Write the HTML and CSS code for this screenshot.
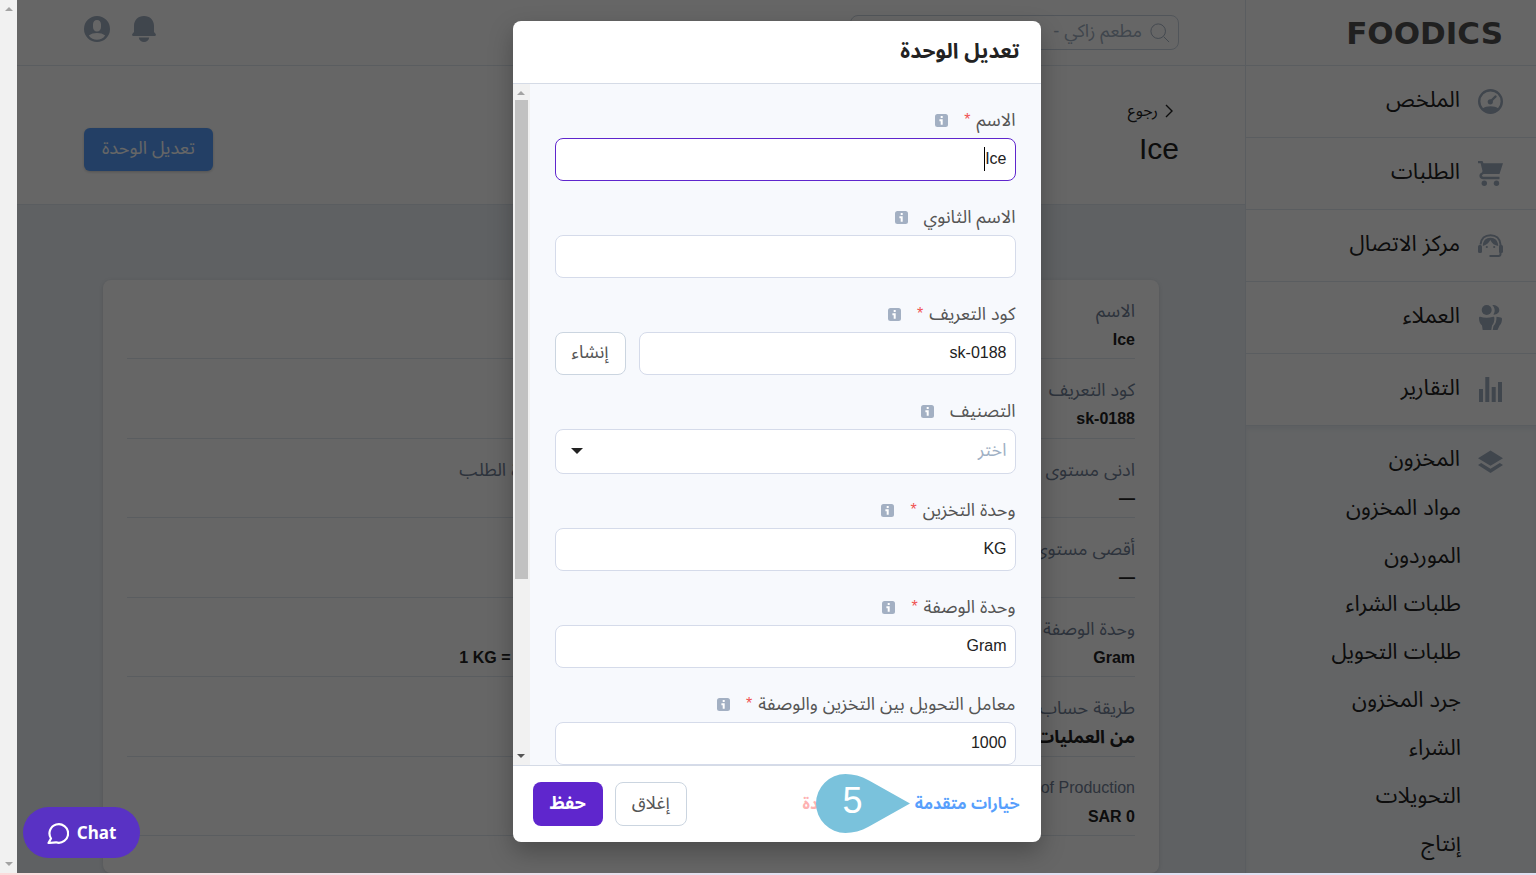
FILE: index.html
```html
<!DOCTYPE html>
<html lang="ar" dir="rtl">
<head>
<meta charset="utf-8">
<meta name="viewport" content="width=device-width, initial-scale=1">
<title>تعديل الوحدة</title>
<link rel="stylesheet" href="styles.css">
</head>
<body>
<svg class="defs" aria-hidden="true">
  <symbol id="info" viewBox="0 0 13 13"><rect width="13" height="13" rx="2.5" fill="#a3b0c3"/><path d="M5.700 2h2v2h-2zM4.400 5.200h3.300v5.500h-2V7.200H4.400z" fill="#fff"/></symbol>
</svg>
<div class="app">
  <nav class="sidebar">
    <a class="logo" href="#">FOODICS</a>
    <a class="nav-item" href="#">
      <svg viewBox="0 0 25 25"><circle cx="12.500" cy="12.500" r="11.300" fill="none" stroke="currentColor" stroke-width="2.400"/><path d="M4.500 19.500c4-3 12-3 16 0-2 3-5 4.500-8 4.500s-6-1.500-8-4.500z" fill="currentColor"/><circle cx="12.300" cy="12.800" r="2.600" fill="currentColor"/><path d="M12.500 12.500l5-5" stroke="currentColor" stroke-width="2.400" stroke-linecap="round"/></svg>
      <span>الملخص</span></a>
    <a class="nav-item" href="#">
      <svg viewBox="0 0 25 25" fill="currentColor"><path d="M0 0h4.500l1 2.300H25L21.500 13H7c-2 0-3 .6-3 1.500s.8 1.300 2 1.300h15.500v2.400H5.500C3 18.200 1.400 17 1.400 14.800c0-1.600 1-2.800 2.600-3.300L4.500 10 2.600 2.300H0z"/><circle cx="6.300" cy="22.300" r="2.700"/><circle cx="18.500" cy="22.300" r="2.700"/></svg>
      <span>الطلبات</span></a>
    <a class="nav-item" href="#">
      <svg viewBox="0 0 25 25" fill="currentColor"><path d="M2.500 11.500C3 5.500 7 2.200 12.500 2.200S22 5.500 22.500 11.500V21c0 1.200-.8 2-2 2H11.500" fill="none" stroke="currentColor" stroke-width="2"/><rect x="0" y="12" width="4" height="8" rx="1.500"/><rect x="21" y="12" width="4" height="8" rx="1.500"/><path d="M4.800 13C4.800 7.500 8 4.700 12.500 4.700S20 7.500 20.300 13c-3.500-.5-6.500-2.500-8-6-1.300 3-4 5-7.500 6z"/><circle cx="8.800" cy="14" r="1.100"/><circle cx="16.200" cy="14" r="1.100"/></svg>
      <span>مركز الاتصال</span></a>
    <a class="nav-item" href="#">
      <svg viewBox="0 0 25 25" fill="currentColor"><circle cx="8.700" cy="5" r="5"/><path d="M14.300 0c4 0 7 2 7 5s-3 5-6 4.600c2-2.700 2-6.600-1-9.600zM1 13c0-.8.5-1.200 1.200-1.200C6 13 11 13 15.200 11.800c.8 0 1.200.4 1.200 1.200 0 3-.6 6-2.400 7.500L13.300 25H4.700L4 20.500C1.800 19 1 16 1 13zM18.500 11.800l4.300.6c.8.2 1.200.8 1.200 1.600 0 2.500-.8 5-2.400 6.500L19.500 25h-4.800l.8-4c2.300-2 3-5 3-9.200z"/></svg>
      <span>العملاء</span></a>
    <a class="nav-item" href="#">
      <svg viewBox="0 0 25 25" fill="currentColor"><path d="M1 12h4v13H1zM7.300 0h4v25h-4zM13.700 10h4v15h-4zM20 5h4v20h-4z"/></svg>
      <span>التقارير</span></a>
    <div class="nav-open">
      <a class="nav-head" href="#">
        <svg viewBox="0 0 25 25" fill="currentColor"><path d="M12.500 1.500L25 9.200 12.500 16.800 0 9.200zM3.200 14l9.300 5.700L21.800 14l3.200 2-12.500 8L0 16z"/></svg>
        <span>المخزون</span></a>
      <a class="nav-sub" href="#">مواد المخزون</a>
      <a class="nav-sub" href="#">الموردون</a>
      <a class="nav-sub" href="#">طلبات الشراء</a>
      <a class="nav-sub" href="#">طلبات التحويل</a>
      <a class="nav-sub" href="#">جرد المخزون</a>
      <a class="nav-sub" href="#">الشراء</a>
      <a class="nav-sub" href="#">التحويلات</a>
      <a class="nav-sub" href="#">إنتاج</a>
    </div>
  </nav>

  <main class="main">
    <header class="topbar">
      <label class="search">
        <svg viewBox="0 0 22 22" fill="none" stroke="currentColor"><circle cx="9" cy="9" r="8"/><path d="M15 15l6 6"/></svg>
        <input type="search" placeholder="مطعم زاكي -" aria-label="بحث">
      </label>
      <div class="top-icons">
        <button class="icon-btn bell" aria-label="التنبيهات"><svg viewBox="0 0 24 26" fill="currentColor"><path d="M12 0c6 0 10 4 10 10v6l1.500 1.700c.8 1 .4 2.300-.8 2.300H1.300C.1 20-.3 18.700.5 17.700L2 16v-6C2 4 6 0 12 0zM6.800 21.500h10.400c-.4 2.800-2.400 4.500-5.200 4.500s-4.800-1.700-5.200-4.500z"/></svg></button>
        <button class="icon-btn user" aria-label="الحساب"><svg viewBox="0 0 26 26" fill="currentColor"><path fill-rule="evenodd" d="M13 0a13 13 0 1 1 0 26 13 13 0 0 1 0-26zm0 4C10.500 4 9 5.800 9 8.500v2.500c0 2.600 1.600 4.500 4 4.500s4-1.900 4-4.500V8.500C17 5.800 15.500 4 13 4zM4.800 19.500c2 3 5 4.300 8.200 4.300s6.200-1.300 8.200-4.300c-4-3.300-12.400-3.300-16.400 0z"/></svg></button>
      </div>
    </header>
    <section class="page-head">
      <div class="page-title">
        <a class="back" href="#"><svg viewBox="0 0 8 14" fill="none" stroke="currentColor" stroke-width="1.400"><path d="M1 1l6 6-6 6"/></svg>رجوع</a>
        <h1>Ice</h1>
      </div>
      <button class="btn-blue">تعديل الوحدة</button>
    </section>
    <section class="content">
      <dl class="card">
        <div><dt>الاسم</dt><dd>Ice</dd></div>
        <div><dt>الاسم الثانوي</dt><dd></dd></div>
        <div><dt>كود التعريف</dt><dd>sk-0188</dd></div>
        <div><dt></dt><dd></dd></div>
        <div><dt>ادنى مستوى</dt><dd>—</dd></div>
        <div><dt>مستويات إعادة الطلب</dt><dd></dd></div>
        <div><dt>أقصى مستوى</dt><dd>—</dd></div>
        <div><dt></dt><dd></dd></div>
        <div><dt>وحدة الوصفة</dt><dd>Gram</dd></div>
        <div><dt></dt><dd><bdi>1 KG = 1000.00 Gram</bdi></dd></div>
        <div><dt>طريقة حساب</dt><dd class="ar">من العمليات</dd></div>
        <div><dt></dt><dd></dd></div>
        <div><dt class="latin">Cost of Production</dt><dd>SAR 0</dd></div>
      </dl>
    </section>
  </main>
  <div class="page-scroll"><i class="up"></i><i class="down"></i></div>

  <div class="overlay">
    <form class="modal" role="dialog" aria-labelledby="dlg">
      <header class="modal-head"><h2 id="dlg">تعديل الوحدة</h2></header>
      <div class="modal-mid">
        <div class="fields">
          <div class="field">
            <label for="f1">الاسم <b>*</b><svg><use href="#info"/></svg></label>
            <div class="control caret"><input id="f1" class="active" type="text" value="Ice"></div>
          </div>
          <div class="field">
            <label for="f2">الاسم الثانوي<svg><use href="#info"/></svg></label>
            <div class="control"><input id="f2" type="text"></div>
          </div>
          <div class="field">
            <label for="f3">كود التعريف <b>*</b><svg><use href="#info"/></svg></label>
            <div class="control"><input id="f3" type="text" value="sk-0188"><button type="button" class="btn-line">إنشاء</button></div>
          </div>
          <div class="field">
            <label for="f4">التصنيف<svg><use href="#info"/></svg></label>
            <div class="control arrow"><select id="f4"><option>اختر</option></select></div>
          </div>
          <div class="field">
            <label for="f5">وحدة التخزين <b>*</b><svg><use href="#info"/></svg></label>
            <div class="control"><input id="f5" type="text" value="KG"></div>
          </div>
          <div class="field">
            <label for="f6">وحدة الوصفة <b>*</b><svg><use href="#info"/></svg></label>
            <div class="control"><input id="f6" type="text" value="Gram"></div>
          </div>
          <div class="field">
            <label for="f7">معامل التحويل بين التخزين والوصفة <b>*</b><svg><use href="#info"/></svg></label>
            <div class="control"><input id="f7" type="text" value="1000"></div>
          </div>
        </div>
        <div class="modal-scroll"><i class="up"></i><i class="thumb"></i><i class="down"></i></div>
      </div>
      <footer class="modal-foot">
        <a class="advanced" href="#">خيارات متقدمة</a>
        <a class="delete" href="#">حذف الوحدة</a>
        <span class="marker"><svg viewBox="0 0 94 59"><path d="M94 29.500L53 6.500C45 2 37 0 29.500 0a29.500 29.500 0 0 0 0 59C37 59 45 57 53 52.500z" fill="#7ac2dc"/></svg><span>5</span></span>
        <div class="actions">
          <button type="button" class="btn-line">إغلاق</button>
          <button type="submit" class="btn-save">حفظ</button>
        </div>
      </footer>
    </form>
  </div>
  <button class="chat"><span>Chat</span><svg viewBox="0 0 22 22" fill="none" stroke="currentColor" stroke-width="2.200" stroke-linejoin="round"><path d="M4 16.500A9.300 9.300 0 1 1 9 20.300L1.500 21z"/></svg></button>
</div>
<div class="bottom-line"></div>
</body>
</html>
```
FILE: styles.css
```css
* { box-sizing: border-box; }
body {
  margin: 0;
  height: 100vh;
  display: flex;
  flex-direction: column;
  overflow: hidden;
  font-family: "Liberation Sans", "Noto Sans Arabic", "DejaVu Sans", sans-serif;
  font-size: 16px;
  line-height: 24px;
  color: #222;
}
a { color: inherit; text-decoration: none; }
button, input, select { font: inherit; color: inherit; margin: 0; }
button { cursor: pointer; }
h1, h2, dl, dd { margin: 0; }
svg { display: block; flex: none; }
.defs { position: absolute; width: 0; height: 0; }
.app { flex: 1; min-height: 0; display: flex; position: relative; overflow: hidden; }
.bottom-line { height: 2px; background: linear-gradient(90deg, #fcdcdc, #dfe0f2 55%); }

.sidebar { width: 291px; flex: none; background: #fff; border-left: 1px solid #e2e8f0; }
.logo {
  height: 66px; display: flex; align-items: center; padding: 0 33px;
  font: bold 31px "DejaVu Sans", sans-serif; border-bottom: 1px solid #e2e8f0;
  direction: ltr; justify-content: flex-end; color: #505050;
}
.nav-item, .nav-head { display: flex; align-items: center; gap: 18px; padding: 0 33px; height: 72px; font-size: 22px; }
.nav-item { border-bottom: 1px solid #e2e8f0; }
.nav-item span, .nav-head span { padding-bottom: 4px; }
.nav-item svg, .nav-head svg { width: 25px; height: 25px; color: #a0aec0; }
.nav-open { background: #f7fafc; height: 700px; box-shadow: inset 0 3px 4px #e8edf3; }
.nav-head { height: 58px; padding-top: 12px; }
.nav-sub { display: block; height: 48px; line-height: 48px; padding: 0 75px; font-size: 22px; }

.main { flex: 1; min-width: 0; background: #edf2f7; }
.topbar { height: 66px; padding: 0 66px 0 67px; background: #fff; border-bottom: 1px solid #e2e8f0; display: flex; justify-content: space-between; align-items: center; }
.search { width: 329px; height: 35px; border: 1px solid #cbd5e0; border-radius: 8px; display: flex; align-items: center; gap: 8px; padding: 0 8px; color: #a0aec0; }
.search svg { width: 20px; height: 20px; }
.search input { flex: 1; min-width: 0; border: 0; background: none; outline: 0; padding: 0 0 4px; font-size: 18px; }
.search input::placeholder { color: #a0aec0; opacity: 1; }
.top-icons { display: flex; gap: 21px; align-items: center; padding-bottom: 8px; }
.icon-btn { border: 0; background: none; padding: 0; color: #a0aec0; }
.icon-btn svg { width: 26px; height: 26px; }
.page-head { height: 139px; padding: 0 66px 0 67px; background: #fff; border-bottom: 1px solid #e2e8f0; display: flex; justify-content: space-between; align-items: center; }
.page-title { padding-bottom: 4px; }
.back { display: flex; align-items: center; gap: 7px; padding-right: 6px; }
.back svg { width: 8px; height: 14px; }
h1 { font-size: 30px; line-height: 36px; font-weight: normal; margin-top: 8px; }
.btn-blue { height: 43px; padding: 0 18px 3px; border: 0; border-radius: 6px; background: #589ffc; color: #fff; font-size: 18px; box-shadow: 0 1px 3px #0003; margin-top: 28px; }
.content { padding: 75px 86px 0 86px; }
.card { background: #fff; border-radius: 8px; box-shadow: 0 1px 4px #0002; padding: 0 24px 37px; display: grid; grid-template-columns: 1fr 1fr; grid-template-rows: 79px; grid-auto-rows: 80px 79px; }
.card > div { border-bottom: 1px solid #e2e8f0; padding-top: 19px; }
.card > div:nth-child(even) { padding-right: 12px; }
.card > div:last-child { grid-column: 1 / -1; }
.card dt { color: #718096; height: 29px; font-size: 18px; }
.card .latin { font-size: 16px; }
.card dd { font-weight: bold; }
.card .ar { font-size: 18px; }

.page-scroll { width: 17px; flex: none; background: #f1f1f1; position: relative; z-index: 2; display: flex; flex-direction: column; justify-content: space-between; align-items: center; padding: 7px 0; }
.up, .down { border: 4px solid transparent; width: 0; height: 0; }
.up { border-top: 0; border-bottom-color: #a3a3a3; }
.down { border-bottom: 0; border-top-color: #a3a3a3; }

.overlay { position: absolute; inset: 0 0 0 17px; background: rgba(0,0,0,.6); display: flex; justify-content: center; padding: 21px 0 31px; }
.modal { width: 528px; background: #fff; border-radius: 8px; overflow: hidden; display: flex; flex-direction: column; box-shadow: 0 10px 24px #0004; }
.modal-head { height: 63px; flex: none; border-bottom: 1px solid #d5dbe6; padding: 0 21px 3px; display: flex; align-items: center; }
h2 { font-size: 21px; line-height: 28px; }
.modal-mid { flex: 1; min-height: 0; display: flex; background: #f7f9fd; }
.fields { flex: 1; min-width: 0; padding: 24px 25px 0; overflow: hidden; }
.field { margin-bottom: 24px; }
.field label { display: flex; align-items: center; height: 24px; margin-bottom: 6px; color: #555; font-size: 18px; }
.field b { color: #f05252; font-size: 16px; font-weight: normal; margin-right: 6px; }
.field label svg { width: 13px; height: 13px; margin-right: 16px; }
.control { display: flex; gap: 13px; position: relative; }
.control input, .control select {
  flex: 1; min-width: 0; height: 43px; border: 1px solid #d5dbea; border-radius: 8px; background: #fff;
  padding: 0 8px 1px; outline: 0; appearance: none;
}
.control input.active { border-color: #5f26cd; }
.control select { height: 45px; color: #a0b0c4; font-size: 18px; padding-bottom: 4px; }
.caret::after { content: ""; position: absolute; right: 31px; top: 9px; width: 1px; height: 24px; background: #000; }
.arrow::after { content: ""; position: absolute; left: 16px; top: 19px; border: 6px solid transparent; border-bottom: 0; border-top-color: #222; }
.btn-line { height: 43px; padding: 0 16px 3px; border: 1px solid #cbd5e0; border-radius: 8px; background: #fff; color: #555; font-size: 18px; }
.modal-scroll { width: 17px; flex: none; background: #f1f1f1; display: flex; flex-direction: column; align-items: center; padding: 7px 0; }
.thumb { width: 13px; height: 479px; margin: 5px 0 auto; background: #c1c1c1; }
.modal-scroll .down { border-top-color: #555; }
.modal-foot { height: 77px; flex: none; border-top: 1px solid #d5dbe6; padding: 0 21px 0 20px; display: flex; align-items: center; position: relative; }
.advanced { color: #589ffc; font-weight: bold; }
.delete { color: #feb2b2; margin-right: 28px; font-weight: bold; }
.actions { display: flex; gap: 12px; margin-right: auto; }
.modal-foot .btn-line, .btn-save { height: 44px; }
.btn-save { padding: 0 17px 3px; border: 0; border-radius: 8px; background: #5f26cd; color: #fff; font-size: 18px; font-weight: bold; }
.marker { position: absolute; right: 131px; top: 8px; width: 94px; height: 59px; }
.marker svg { width: 94px; height: 59px; }
.marker span { position: absolute; left: 27px; top: 7px; font-size: 36px; line-height: 40px; color: #fff; }
.chat {
  position: absolute; left: 23px; bottom: 15px; z-index: 3; width: 117px; height: 51px; border: 0; border-radius: 26px;
  background: #5932c4; color: #fff; font: bold 17px "Noto Sans", sans-serif; display: flex; align-items: center; justify-content: center; gap: 8px;
}
.chat svg { width: 22px; height: 22px; }
```
